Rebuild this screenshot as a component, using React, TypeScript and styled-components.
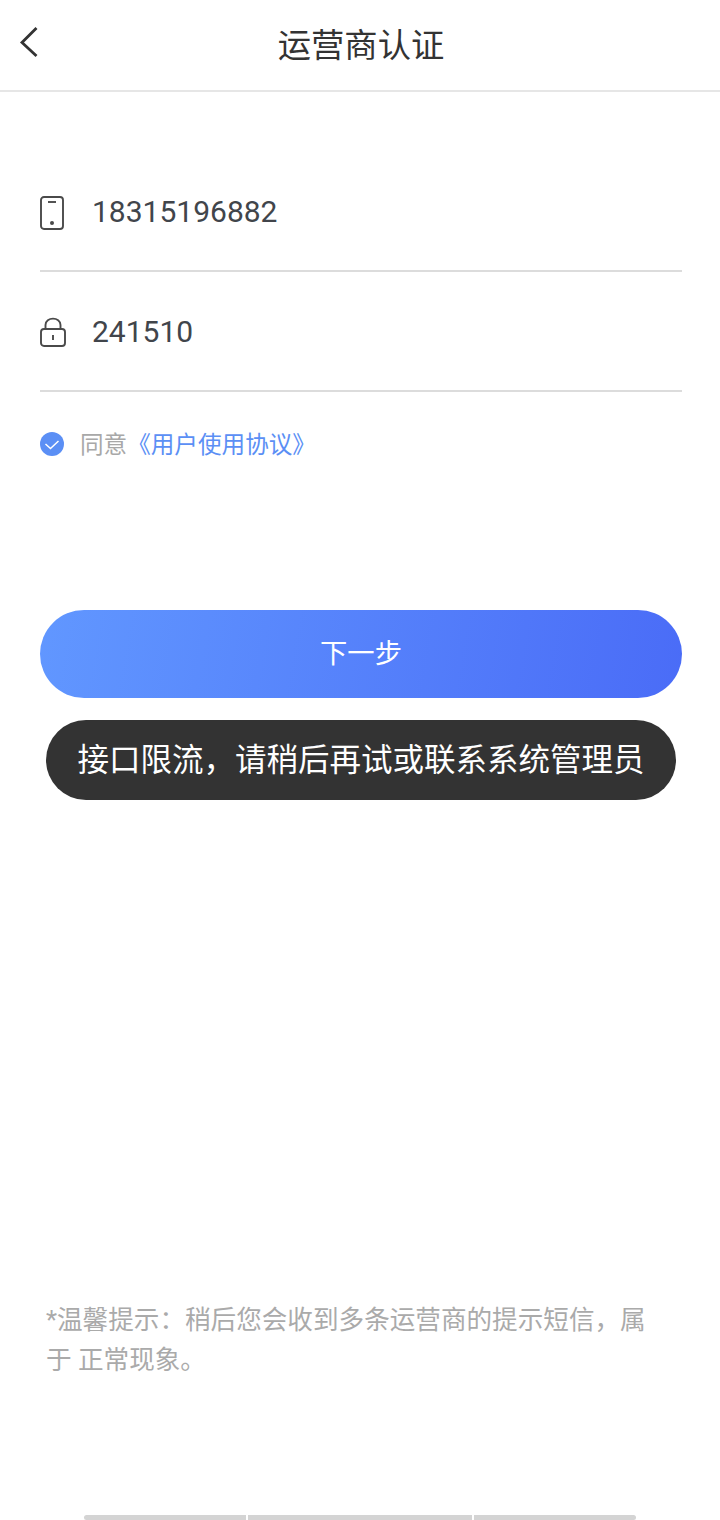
import React from "react";
import styled, { createGlobalStyle } from "styled-components";

const GlobalStyle = createGlobalStyle`
  html, body {
    margin: 0;
    padding: 0;
    background: #fff;
  }
`;

const Page = styled.div`
  position: relative;
  display: flex;
  flex-direction: column;
  width: 720px;
  height: 1520px;
  overflow: hidden;
  background: #fff;
  font-family: Roboto, "Noto Sans CJK SC", sans-serif;
`;

const Header = styled.header`
  position: relative;
  display: flex;
  align-items: center;
  justify-content: center;
  height: 90px;
  padding: 0 0 6px 2px;
  box-sizing: border-box;
  flex-shrink: 0;
  margin-bottom: 2px;
  box-shadow: 0 2px 0 #e6e6e6;
`;

const BackButton = styled.svg`
  position: absolute;
  left: 18px;
  top: 25px;
  width: 22px;
  height: 34px;
  fill: none;
  stroke: #333;
  stroke-width: 2.8;
`;

const Title = styled.h1`
  margin: 0;
  font-size: 33.3px;
  font-weight: 400;
  color: #333;
`;

const Form = styled.div`
  display: flex;
  flex-direction: column;
  padding: 60px 38px 0 40px;
`;

const Row = styled.div`
  display: flex;
  align-items: center;
  height: 118px;
  border-bottom: 2px solid #dcdcdc;
`;

const IconSlot = styled.div`
  display: flex;
  width: 52px;
  flex-shrink: 0;
  padding-top: 4px;
`;

const Icon = styled.svg`
  width: 26px;
  height: 36px;
  fill: none;
  stroke: #4a4a4a;
  stroke-width: 1.9;
`;

const Value = styled.span`
  font-size: 30px;
  color: #41454b;
`;

const Agreement = styled.div`
  display: flex;
  align-items: center;
  height: 32px;
  margin-top: 36px;
  font-size: 23.6px;
`;

const AgreementText = styled.div`
  margin-bottom: 3px;
`;

const CheckMark = styled.svg`
  width: 24px;
  height: 24px;
  margin-right: 16px;
  flex-shrink: 0;
`;

const Muted = styled.span`
  color: #a8a8a8;
`;

const Link = styled.span`
  color: #5b8ff5;
`;

const NextButton = styled.button`
  display: block;
  height: 88px;
  margin: 150px 38px 0 40px;
  padding: 0 0 6px;
  border: 0;
  border-radius: 44px;
  background: linear-gradient(100deg, #6197ff 0%, #4a6cf7 100%);
  color: #fff;
  font-family: inherit;
  font-size: 27.3px;
  flex-shrink: 0;
`;

const Toast = styled.div`
  position: absolute;
  left: 46px;
  top: 720px;
  display: flex;
  align-items: center;
  justify-content: center;
  width: 630px;
  height: 80px;
  padding-bottom: 6px;
  box-sizing: border-box;
  border-radius: 40px;
  background: #333;
  color: #fff;
  font-size: 31.5px;
  white-space: nowrap;
`;

const Tip = styled.p`
  margin: auto 70px 0 46px;
  font-size: 25.6px;
  line-height: 40px;
  color: #aaa;
`;

const HomeBar = styled.div`
  display: flex;
  gap: 2px;
  width: 552px;
  height: 5px;
  margin: 135px auto 0;
  flex-shrink: 0;
`;

const HomeSegment = styled.div<{ $grow: number; $radius?: string }>`
  flex: ${({ $grow }) => $grow} 0 0;
  background: #d4d4d4;
  border-radius: ${({ $radius }) => $radius || "0"};
`;

export default function App() {
  return (
    <Page>
      <GlobalStyle />
      <Header>
        <BackButton viewBox="0 0 22 34">
          <path d="M18.5 3 L4 17.5 L18.5 31" />
        </BackButton>
        <Title>运营商认证</Title>
      </Header>
      <Form>
        <Row>
          <IconSlot>
            <Icon viewBox="0 0 26 36">
              <rect x="1" y="2" width="22" height="32" rx="3" />
              <path d="M8 7 H16" />
              <circle cx="12" cy="28" r="2" fill="#4a4a4a" stroke="none" />
            </Icon>
          </IconSlot>
          <Value>18315196882</Value>
        </Row>
        <Row>
          <IconSlot>
            <Icon viewBox="0 0 26 36">
              <rect x="1" y="14" width="24" height="17" rx="3" />
              <path d="M5.5 14 V10 C5.5 1.5 20.5 1.5 20.5 10 V14" />
              <path d="M13 20 V25" />
            </Icon>
          </IconSlot>
          <Value>241510</Value>
        </Row>
        <Agreement>
          <CheckMark viewBox="0 0 24 24">
            <circle cx="12" cy="12" r="12" fill="#5b8ff5" />
            <path d="M5.5 12 L10.5 16.5 L18.5 9" fill="none" stroke="#fff" strokeWidth="1.5" />
          </CheckMark>
          <AgreementText>
            <Muted>同意</Muted>
            <Link>《用户使用协议》</Link>
          </AgreementText>
        </Agreement>
      </Form>
      <NextButton>下一步</NextButton>
      <Toast>接口限流，请稍后再试或联系系统管理员</Toast>
      <Tip>*温馨提示：稍后您会收到多条运营商的提示短信，属于 正常现象。</Tip>
      <HomeBar>
        <HomeSegment $grow={162} $radius="3px 0 0 3px" />
        <HomeSegment $grow={224} />
        <HomeSegment $grow={162} $radius="0 3px 3px 0" />
      </HomeBar>
    </Page>
  );
}
